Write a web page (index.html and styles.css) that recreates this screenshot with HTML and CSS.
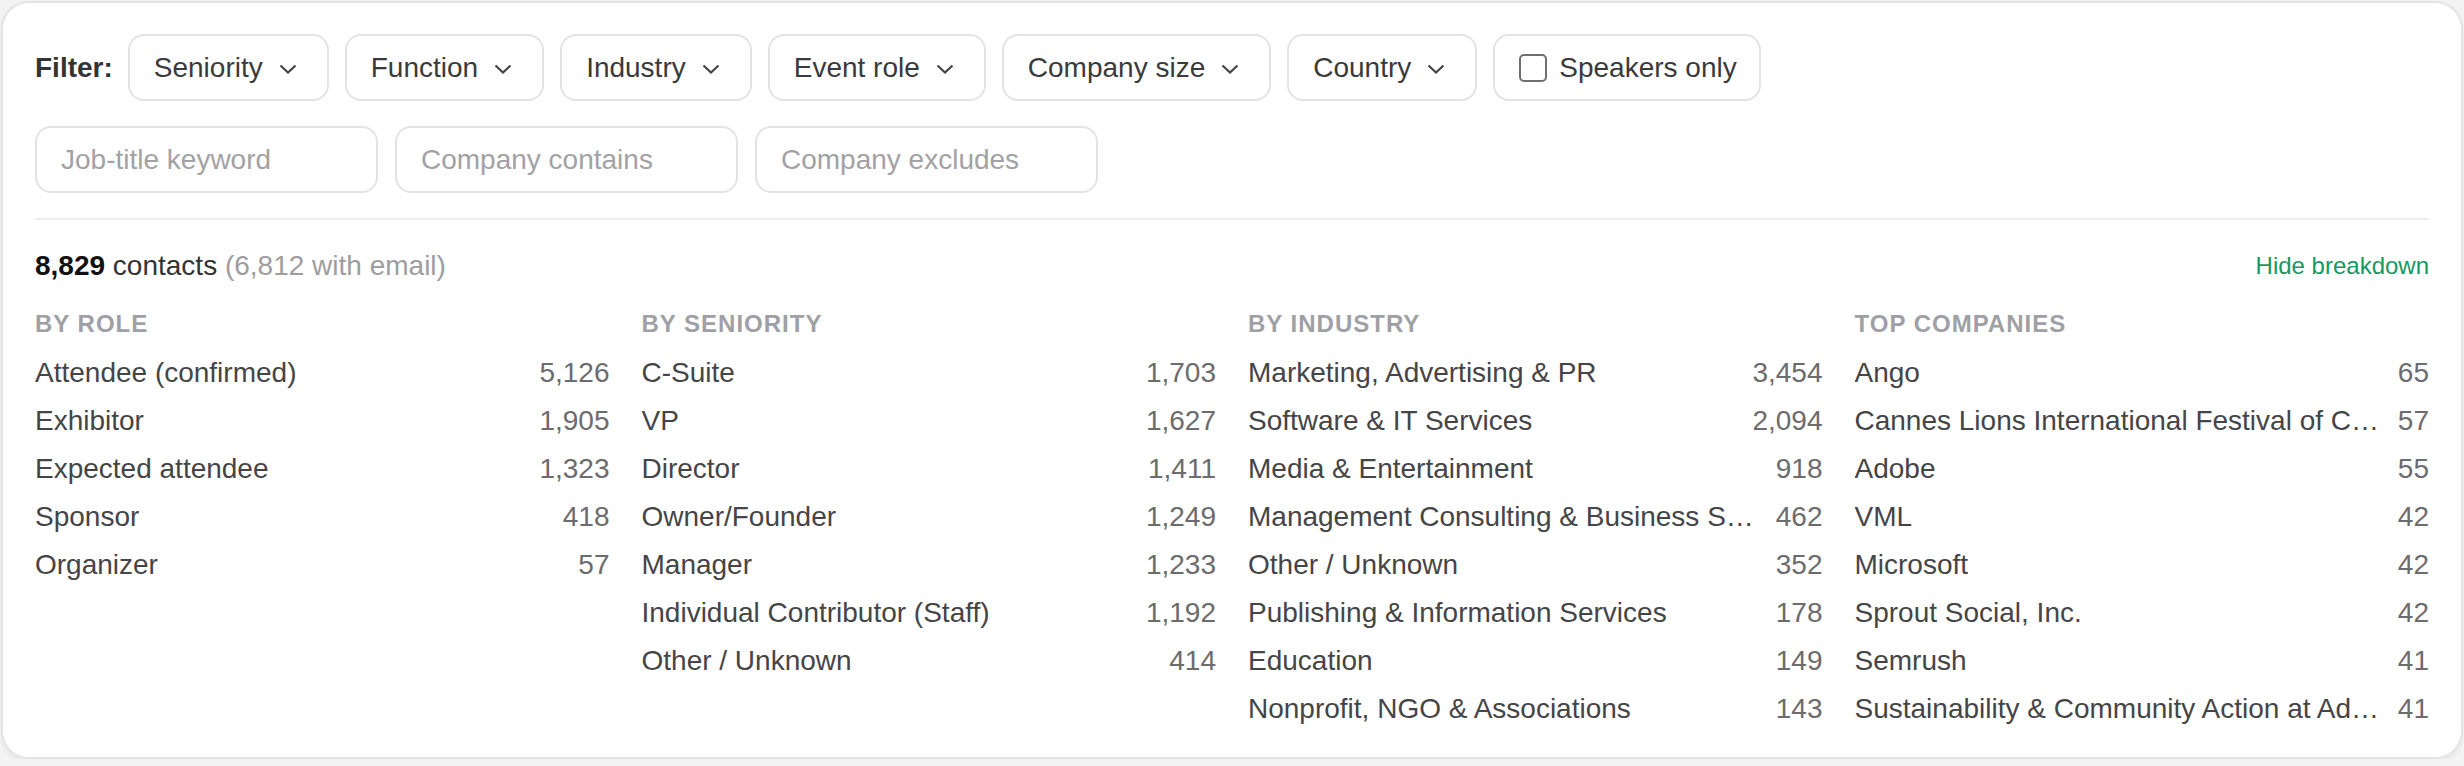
FILE: index.html
```html
<!DOCTYPE html>
<html lang="en">
<head>
    <meta charset="UTF-8" />
    <title>Contacts breakdown</title>
    <link rel="stylesheet" href="styles.css">
</head>
<body>
    <div class="panel">
        <div class="filters">
            <span class="filter-label">Filter:</span>
            <button class="dropdown">Seniority <svg class="chev" viewBox="0 0 18 10"><path d="M1.5 1.5 L9 8.5 L16.5 1.5" /></svg></button>
            <button class="dropdown">Function <svg class="chev" viewBox="0 0 18 10"><path d="M1.5 1.5 L9 8.5 L16.5 1.5" /></svg></button>
            <button class="dropdown">Industry <svg class="chev" viewBox="0 0 18 10"><path d="M1.5 1.5 L9 8.5 L16.5 1.5" /></svg></button>
            <button class="dropdown">Event role <svg class="chev" viewBox="0 0 18 10"><path d="M1.5 1.5 L9 8.5 L16.5 1.5" /></svg></button>
            <button class="dropdown">Company size <svg class="chev" viewBox="0 0 18 10"><path d="M1.5 1.5 L9 8.5 L16.5 1.5" /></svg></button>
            <button class="dropdown">Country <svg class="chev" viewBox="0 0 18 10"><path d="M1.5 1.5 L9 8.5 L16.5 1.5" /></svg></button>
            <label class="dropdown toggle"><input type="checkbox"> Speakers only</label>
        </div>

        <div class="searches">
            <input class="search" type="text" placeholder="Job-title keyword">
            <input class="search" type="text" placeholder="Company contains">
            <input class="search" type="text" placeholder="Company excludes">
        </div>

        <div class="summary">
            <div class="total"><strong>8,829</strong> contacts <span class="muted">(6,812 with email)</span></div>
            <a class="link" href="#">Hide breakdown</a>
        </div>

        <div class="breakdown">
            <div class="group">
                <div class="group-title">By role</div>
                <ul>
                    <li><span class="name">Attendee (confirmed)</span><span class="count">5,126</span></li>
                    <li><span class="name">Exhibitor</span><span class="count">1,905</span></li>
                    <li><span class="name">Expected attendee</span><span class="count">1,323</span></li>
                    <li><span class="name">Sponsor</span><span class="count">418</span></li>
                    <li><span class="name">Organizer</span><span class="count">57</span></li>
                </ul>
            </div>
            <div class="group">
                <div class="group-title">By seniority</div>
                <ul>
                    <li><span class="name">C-Suite</span><span class="count">1,703</span></li>
                    <li><span class="name">VP</span><span class="count">1,627</span></li>
                    <li><span class="name">Director</span><span class="count">1,411</span></li>
                    <li><span class="name">Owner/Founder</span><span class="count">1,249</span></li>
                    <li><span class="name">Manager</span><span class="count">1,233</span></li>
                    <li><span class="name">Individual Contributor (Staff)</span><span class="count">1,192</span></li>
                    <li><span class="name">Other / Unknown</span><span class="count">414</span></li>
                </ul>
            </div>
            <div class="group">
                <div class="group-title">By industry</div>
                <ul>
                    <li><span class="name">Marketing, Advertising &amp; PR</span><span class="count">3,454</span></li>
                    <li><span class="name">Software &amp; IT Services</span><span class="count">2,094</span></li>
                    <li><span class="name">Media &amp; Entertainment</span><span class="count">918</span></li>
                    <li><span class="name" title="Management Consulting &amp; Business Services">Management Consulting &amp; Business Services</span><span class="count">462</span></li>
                    <li><span class="name">Other / Unknown</span><span class="count">352</span></li>
                    <li><span class="name">Publishing &amp; Information Services</span><span class="count">178</span></li>
                    <li><span class="name">Education</span><span class="count">149</span></li>
                    <li><span class="name">Nonprofit, NGO &amp; Associations</span><span class="count">143</span></li>
                </ul>
            </div>
            <div class="group">
                <div class="group-title">Top companies</div>
                <ul>
                    <li><span class="name">Ango</span><span class="count">65</span></li>
                    <li><span class="name" title="Cannes Lions International Festival of Creativity">Cannes Lions International Festival of Creativity</span><span class="count">57</span></li>
                    <li><span class="name">Adobe</span><span class="count">55</span></li>
                    <li><span class="name">VML</span><span class="count">42</span></li>
                    <li><span class="name">Microsoft</span><span class="count">42</span></li>
                    <li><span class="name">Sprout Social, Inc.</span><span class="count">42</span></li>
                    <li><span class="name">Semrush</span><span class="count">41</span></li>
                    <li><span class="name" title="Sustainability &amp; Community Action at Adobe">Sustainability &amp; Community Action at Adobe</span><span class="count">41</span></li>
                </ul>
            </div>
        </div>
    </div>
</body>
</html>
```

FILE: styles.css
```css
body {
    margin: 0;
    padding: 1px 1px 0 1px;
    background-color: #f3f3f4;
    font-family: "Liberation Sans", Arial, sans-serif;
    color: #333;
}

.panel {
    background: white;
    border: 2px solid #e4e4e4;
    border-radius: 28px;
    padding: 31px 32px 24px 32px;
    box-shadow: 0 3px 6px rgba(0,0,0,0.05);
}

/* Filterzeile */
.filters {
    display: flex;
    align-items: center;
    gap: 16px;
}
.filter-label {
    font-size: 28px;
    font-weight: bold;
    color: #333;
    margin-right: -1px;
}
.dropdown {
    display: flex;
    align-items: center;
    gap: 16px;
    box-sizing: border-box;
    height: 67px;
    padding: 0 30px 0 24px;
    border: 2px solid #e3e3e3;
    border-radius: 16px;
    background: white;
    font-family: inherit;
    font-size: 28px;
    color: #3a3a3c;
    cursor: pointer;
}
.chev {
    width: 18px;
    height: 10px;
    margin-top: 2px;
    fill: none;
    stroke: #444;
    stroke-width: 2.2;
}
.toggle {
    gap: 12px;
    padding: 0 22px 0 24px;
}
.toggle input {
    appearance: none;
    margin: 0;
    width: 28px;
    height: 28px;
    border: 2px solid #6f6f6f;
    border-radius: 5px;
    background: white;
}

/* Suchfelder */
.searches {
    display: flex;
    gap: 17px;
    margin-top: 25px;
}
.search {
    box-sizing: border-box;
    width: 343px;
    height: 67px;
    padding: 0 24px;
    border: 2px solid #e3e3e3;
    border-radius: 16px;
    font-family: inherit;
    font-size: 28px;
    color: #333;
}
.search::placeholder {
    color: #a2a2a4;
}

/* Zusammenfassung */
.summary {
    display: flex;
    justify-content: space-between;
    align-items: center;
    border-top: 2px solid #eeeeee;
    margin-top: 25px;
    padding-top: 30px;
    line-height: 32px;
}
.total {
    font-size: 28px;
    color: #333;
}
.total strong {
    color: #111;
}
.muted {
    color: #9d9d9f;
}
.link {
    font-size: 24px;
    color: #16995f;
    text-decoration: none;
}

/* Aufschlüsselung */
.breakdown {
    display: grid;
    grid-template-columns: repeat(4, minmax(0, 1fr));
    gap: 32px;
    margin-top: 27px;
}
.group {
    min-width: 0;
}
.group-title {
    font-size: 24px;
    line-height: 30px;
    font-weight: bold;
    text-transform: uppercase;
    letter-spacing: 1px;
    color: #9fa0a5;
}
.group ul {
    list-style: none;
    margin: 10px 0 0 0;
    padding: 0;
}
.group li {
    display: flex;
    justify-content: space-between;
    gap: 16px;
    height: 48px;
    align-items: center;
    font-size: 28px;
}
.name {
    color: #454547;
    white-space: nowrap;
    overflow: hidden;
    text-overflow: ellipsis;
    min-width: 0;
}
.count {
    color: #6c6c6e;
    flex-shrink: 0;
}
```
